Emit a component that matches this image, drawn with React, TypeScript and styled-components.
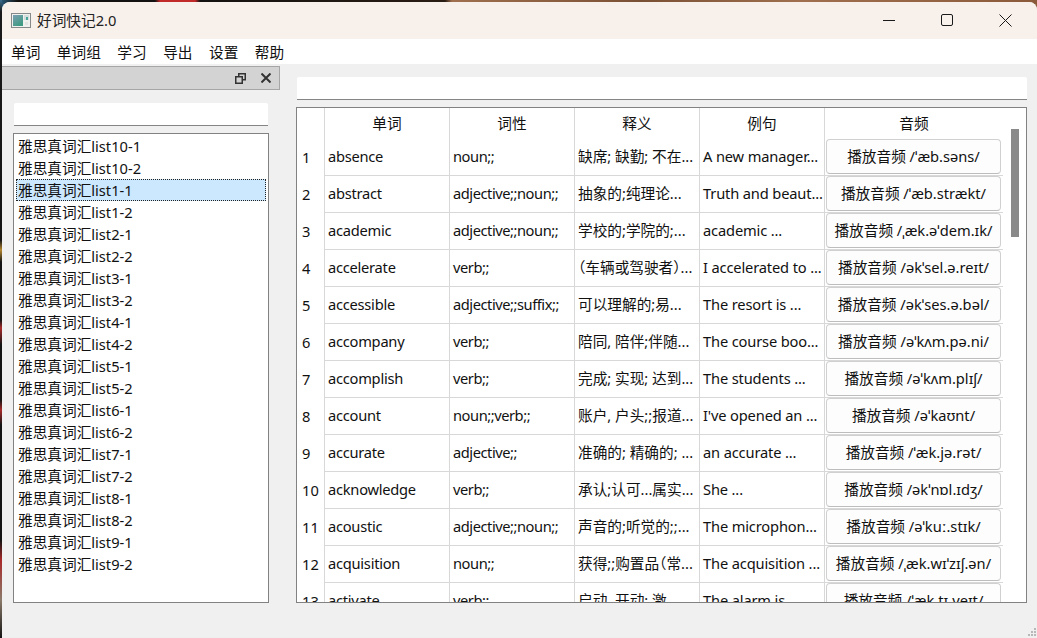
import React from "react";
import styled, { createGlobalStyle } from "styled-components";

const FONT = `"Noto Sans", "Noto Sans CJK SC", sans-serif`;

const words = [
  ["absence", "noun;;", "缺席; 缺勤; 不在...", "A new manager...", "播放音频 /ˈæb.səns/"],
  ["abstract", "adjective;;noun;;", "抽象的;纯理论...", "Truth and beaut...", "播放音频 /ˈæb.strækt/"],
  ["academic", "adjective;;noun;;", "学校的;学院的;...", "academic ...", "播放音频 /ˌæk.əˈdem.ɪk/"],
  ["accelerate", "verb;;", "（车辆或驾驶者）...", "I accelerated to ...", "播放音频 /əkˈsel.ə.reɪt/"],
  ["accessible", "adjective;;suffix;;", "可以理解的;易...", "The resort is ...", "播放音频 /əkˈses.ə.bəl/"],
  ["accompany", "verb;;", "陪同, 陪伴;伴随...", "The course boo...", "播放音频 /əˈkʌm.pə.ni/"],
  ["accomplish", "verb;;", "完成; 实现; 达到...", "The students ...", "播放音频 /əˈkʌm.plɪʃ/"],
  ["account", "noun;;verb;;", "账户, 户头;;报道...", "I've opened an ...", "播放音频 /əˈkaʊnt/"],
  ["accurate", "adjective;;", "准确的; 精确的; ...", "an accurate ...", "播放音频 /ˈæk.jə.rət/"],
  ["acknowledge", "verb;;", "承认;认可...属实...", "She ...", "播放音频 /əkˈnɒl.ɪdʒ/"],
  ["acoustic", "adjective;;noun;;", "声音的;听觉的;;...", "The microphon...", "播放音频 /əˈkuː.stɪk/"],
  ["acquisition", "noun;;", "获得;;购置品（常...", "The acquisition ...", "播放音频 /ˌæk.wɪˈzɪʃ.ən/"],
  ["activate", "verb;;", "启动, 开动; 激...", "The alarm is ...", "播放音频 /ˈæk.tɪ.veɪt/"],
];

const lists = [
  "10-1", "10-2", "1-1", "1-2", "2-1", "2-2", "3-1", "3-2", "4-1", "4-2",
  "5-1", "5-2", "6-1", "6-2", "7-1", "7-2", "8-1", "8-2", "9-1", "9-2",
];

const menus = ["单词", "单词组", "学习", "导出", "设置", "帮助"];
const headers = ["单词", "词性", "释义", "例句", "音频"];

const Global = createGlobalStyle`
  html, body {
    margin: 0;
    height: 100%;
    overflow: hidden;
    background:
      linear-gradient(180deg, #3a6f8f 0, #1a1a1a 12px, #141414 240px, #b5872f 250px, #141414 262px, #141414 320px, #a82a2a 328px, #141414 345px, #141414 400px, #a82a2a 410px, #141414 425px, #141414 540px, #a82a2a 560px, #8a7a6a 600px, #141414 638px) left top / 2px 100% no-repeat,
      linear-gradient(90deg, #2b5f80 0, #141210 18px, #141210 155px, #c22a2a 160px, #c22a2a 195px, #141210 200px, #2a1d14 445px, #a0704e 452px, #7a5034 640px, #a0704e 800px, #8a5a3a 100%);
  }
  #root { height: 100%; }
`;

const Desktop = styled.div`
  height: 638px;
  width: 1037px;
  padding: 2px 0 0 2px;
  box-sizing: border-box;
`;

const Window = styled.div`
  height: 636px;
  background: #f0f0f0;
  border-radius: 8px 8px 0 0;
  overflow: hidden;
  display: flex;
  flex-direction: column;
  font-family: ${FONT};
  font-size: 14.67px;
  color: #111;
  position: relative;
`;

const TitleBar = styled.div`
  height: 37px;
  box-sizing: border-box;
  background: #f7f0eb;
  display: flex;
  align-items: center;
  padding: 0 2px 3px 9px;
  flex: none;
`;

const TitleIcon = styled.svg`
  margin-top: 2px;
`;

const TitleText = styled.span`
  margin-left: 6px;
  color: #222;
`;

const WinButtons = styled.div`
  margin-left: auto;
  display: flex;
  height: 100%;
`;

const WinButton = styled.div`
  width: 58.5px;
  padding-top: 2px;
  display: flex;
  align-items: center;
  justify-content: center;
  color: #1a1a1a;
`;

const MenuBar = styled.div`
  height: 25px;
  background: #fff;
  display: flex;
  align-items: center;
  padding-left: 9px;
  gap: 16.5px;
  flex: none;
`;

const MenuItem = styled.span`
  color: #111;
`;

const Body = styled.div`
  flex: 1;
  display: flex;
  min-height: 0;
`;

const Dock = styled.div`
  width: 278px;
  padding-top: 2px;
  display: flex;
  flex-direction: column;
  flex: none;
`;

const DockTitle = styled.div`
  height: 22px;
  background: #d3d3d3;
  border: 1px solid #a6a6a6;
  border-left: none;
  display: flex;
  align-items: center;
  justify-content: flex-end;
  gap: 15px;
  padding-right: 8px;
  flex: none;
`;

const DockBody = styled.div`
  padding: 13px 11px 35px;
  flex: 1;
  display: flex;
  flex-direction: column;
  gap: 7px;
  min-height: 0;
`;

const LineEdit = styled.div<{ $wide?: boolean }>`
  height: 22px;
  background: #fff;
  border-bottom: 1px solid #858585;
  flex: none;
  margin: ${(p) => (p.$wide ? "0 0 0 1px" : "0 1px")};
  border-radius: 2px 2px 0 0;
`;

const ListBox = styled.div`
  flex: 1;
  background: #fff;
  border: 1px solid #828282;
  padding: 1px 2px;
  min-height: 0;
`;

const ListRow = styled.div<{ $selected?: boolean }>`
  height: 22px;
  line-height: 22px;
  padding-left: 2px;
  white-space: nowrap;
  box-sizing: border-box;
  background: ${(p) => (p.$selected ? "#cce8ff" : "transparent")};
  outline: ${(p) => (p.$selected ? "1px dotted #222" : "none")};
  outline-offset: -1px;
`;

const Main = styled.div`
  flex: 1;
  padding: 13px 10px 35px 16px;
  display: flex;
  flex-direction: column;
  gap: 7px;
  min-width: 0;
`;

const TableFrame = styled.div`
  flex: 1;
  background: #fff;
  border: 1px solid #828282;
  display: flex;
  min-height: 0;
  overflow: hidden;
`;

const Grid = styled.div`
  width: 706px;
  flex: none;
`;

const HeaderRow = styled.div`
  display: grid;
  grid-template-columns: 28px 125px 125px 125px 125px 178px;
  height: 30px;
`;

const HeaderCell = styled.div`
  text-align: center;
  line-height: 31px;
  border-right: 1px solid #d8d8d8;
  &:last-child { border-right: none; }
`;

const Row = styled.div`
  display: grid;
  grid-template-columns: 28px 125px 125px 125px 125px 178px;
  height: 37px;
`;

const RowHead = styled.div`
  border-right: 1px solid #d8d8d8;
  padding-left: 5px;
  line-height: 38px;
`;

const Cell = styled.div<{ $tracking?: string }>`
  border-right: 1px solid #d8d8d8;
  border-bottom: 1px solid #d8d8d8;
  padding-left: 3px;
  line-height: 37px;
  white-space: nowrap;
  overflow: hidden;
  letter-spacing: ${(p) => p.$tracking ?? "normal"};
`;

const MeaningCell = styled(Cell)`
  font-feature-settings: "halt";
`;

const ButtonCell = styled.div`
  border-bottom: 1px solid #d8d8d8;
  padding: 1px 2px 1px 1px;
`;

const PlayButton = styled.div`
  height: 100%;
  box-sizing: border-box;
  background: #fdfdfd;
  border: 1px solid #d0d0d0;
  border-bottom-color: #bdbdbd;
  border-radius: 4px;
  text-align: center;
  line-height: 33px;
  white-space: nowrap;
  overflow: hidden;
`;

const Scrollbar = styled.div`
  flex: 1;
  padding: 21px 7px 0 8px;
`;

const ScrollThumb = styled.div`
  height: 108px;
  background: #8a8a8a;
`;

const Grip = styled.svg`
  position: absolute;
  right: 0;
  bottom: 0;
`;

const AppIcon = () => (
  <TitleIcon width="20" height="15" viewBox="0 0 20 15">
    <defs>
      <linearGradient id="panel" x1="0" y1="0" x2="0.6" y2="1">
        <stop offset="0" stopColor="#7d9fb4" />
        <stop offset="1" stopColor="#3f9a82" />
      </linearGradient>
    </defs>
    <rect x="0.5" y="0.5" width="19" height="14" fill="#f0f1ee" stroke="#85898a" />
    <rect x="2" y="2" width="10" height="11" fill="url(#panel)" />
    <rect x="13" y="2" width="5" height="5" fill="#d5dcdc" />
    <rect x="15" y="4" width="2" height="3" fill="#4aa59a" />
    <rect x="14" y="9" width="3" height="3" fill="#dfe3e1" />
  </TitleIcon>
);

const FloatIcon = () => (
  <svg width="11" height="11" viewBox="0 0 11 11" fill="none" stroke="#333" strokeWidth="1.5">
    <rect x="3.75" y="0.75" width="6.5" height="6" />
    <rect x="0.75" y="3.75" width="6.5" height="6.5" fill="#d3d3d3" />
  </svg>
);

const CloseIcon = () => (
  <svg width="10" height="10" viewBox="0 0 10 10" stroke="#333" strokeWidth="2">
    <path d="M0.5 0.5L9.5 9.5M9.5 0.5L0.5 9.5" />
  </svg>
);

export default function App() {
  return (
    <>
      <Global />
      <Desktop>
        <Window>
          <TitleBar>
            <AppIcon />
            <TitleText>好词快记2.0</TitleText>
            <WinButtons>
              <WinButton>
                <svg width="12" height="12" viewBox="0 0 12 12" stroke="currentColor">
                  <path d="M0 6.5H12" />
                </svg>
              </WinButton>
              <WinButton>
                <svg width="12" height="12" viewBox="0 0 12 12" fill="none" stroke="currentColor">
                  <rect x="0.5" y="0.5" width="11" height="11" rx="1.5" />
                </svg>
              </WinButton>
              <WinButton>
                <svg width="13" height="13" viewBox="0 0 13 13" stroke="currentColor">
                  <path d="M0.5 0.5L12.5 12.5M12.5 0.5L0.5 12.5" />
                </svg>
              </WinButton>
            </WinButtons>
          </TitleBar>
          <MenuBar>
            {menus.map((m) => (
              <MenuItem key={m}>{m}</MenuItem>
            ))}
          </MenuBar>
          <Body>
            <Dock>
              <DockTitle>
                <FloatIcon />
                <CloseIcon />
              </DockTitle>
              <DockBody>
                <LineEdit />
                <ListBox>
                  {lists.map((l) => (
                    <ListRow key={l} $selected={l === "1-1"}>
                      雅思真词汇list{l}
                    </ListRow>
                  ))}
                </ListBox>
              </DockBody>
            </Dock>
            <Main>
              <LineEdit $wide />
              <TableFrame>
                <Grid>
                  <HeaderRow>
                    <HeaderCell />
                    {headers.map((h) => (
                      <HeaderCell key={h}>{h}</HeaderCell>
                    ))}
                  </HeaderRow>
                  {words.map((w, i) => (
                    <Row key={w[0]}>
                      <RowHead>{i + 1}</RowHead>
                      <Cell $tracking="-0.25px">{w[0]}</Cell>
                      <Cell $tracking="-0.45px">{w[1]}</Cell>
                      <MeaningCell>{w[2]}</MeaningCell>
                      <Cell $tracking="-0.15px">{w[3]}</Cell>
                      <ButtonCell>
                        <PlayButton>{w[4]}</PlayButton>
                      </ButtonCell>
                    </Row>
                  ))}
                </Grid>
                <Scrollbar>
                  <ScrollThumb />
                </Scrollbar>
              </TableFrame>
            </Main>
          </Body>
          <Grip width="10" height="11" viewBox="0 0 10 11" fill="#b8b8b8">
            <rect x="7" y="1" width="2" height="2" />
            <rect x="4" y="4" width="2" height="2" />
            <rect x="7" y="4" width="2" height="2" />
            <rect x="1" y="7" width="2" height="2" />
            <rect x="4" y="7" width="2" height="2" />
            <rect x="7" y="7" width="2" height="2" />
          </Grip>
        </Window>
      </Desktop>
    </>
  );
}
